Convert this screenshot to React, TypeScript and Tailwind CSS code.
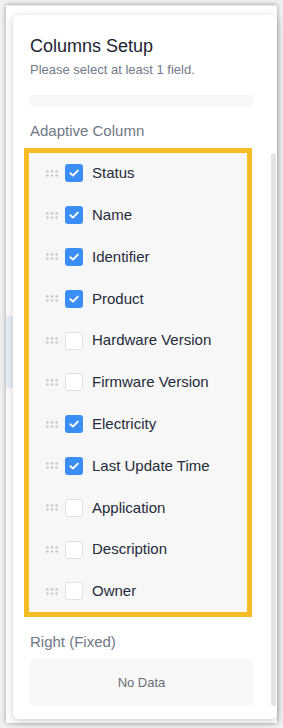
const fields = [
  { label: "Status", checked: true },
  { label: "Name", checked: true },
  { label: "Identifier", checked: true },
  { label: "Product", checked: true },
  { label: "Hardware Version", checked: false },
  { label: "Firmware Version", checked: false },
  { label: "Electricity", checked: true },
  { label: "Last Update Time", checked: true },
  { label: "Application", checked: false },
  { label: "Description", checked: false },
  { label: "Owner", checked: false },
];

function DragHandle() {
  return (
    <svg width="12" height="7" viewBox="0 0 12 7" className="shrink-0" aria-hidden="true">
      {[1.4, 6, 10.6].map((x) =>
        [1.4, 5.6].map((y) => <circle key={`${x}-${y}`} cx={x} cy={y} r="1.3" fill="#c9ccd3" />),
      )}
    </svg>
  );
}

function Checkbox({ checked }: { checked: boolean }) {
  if (!checked) {
    return <span className="block h-[18px] w-[18px] shrink-0 rounded-[3px] border border-[#dfe1e6] bg-white" />;
  }
  return (
    <span className="flex h-[18px] w-[18px] shrink-0 items-center justify-center rounded-[3px] bg-[#3a8ef6]">
      <svg width="12" height="12" viewBox="0 0 12 12" aria-hidden="true">
        <polyline
          points="2.4,6.2 5,8.6 9.8,3.6"
          fill="none"
          stroke="#fff"
          strokeWidth="1.9"
          strokeLinecap="round"
          strokeLinejoin="round"
        />
      </svg>
    </span>
  );
}

export default function App() {
  return (
    <div
      className="h-[728px] w-[283px] overflow-hidden bg-[#f1f1f1] pl-[6px] pt-[5px]"
      style={{ fontFamily: '"Liberation Sans", Arial, sans-serif' }}
    >
      {/* page behind the popover */}
      <div className="flex h-[718px] w-[271px] border-t border-[#e6e6e6] bg-white shadow-[0_0_5px_rgba(0,0,0,0.35)]">
        <div className="flex w-[7px] flex-col">
          <div className="h-[310px]" />
          <div className="h-[72px] bg-[#e8f0f8]" />
        </div>

        {/* popover */}
        <div className="relative mt-[9px] flex h-[704px] w-[264px] flex-col items-start rounded-[6px] bg-white pl-[17px] pr-[24px] pt-[18.5px] shadow-[0_2px_8px_rgba(0,0,0,0.2)]">
          <h2 className="text-[18px] leading-[24px] text-[#1d2433]">Columns Setup</h2>
          <p className="mt-[3px] text-[13px] leading-[18px] text-[#717a8a]">Please select at least 1 field.</p>

          <div className="mt-[16px] h-[12px] w-[223px] rounded-[4px] bg-[#f7f7f7]" />

          <p className="mt-[14.5px] text-[15px] leading-[20px] text-[#6f7785]">Adaptive Column</p>

          <div className="-ml-[6px] mt-[6.5px] w-[228px] border-[5px] border-[#f5bd23] bg-[#f7f7f7]">
            {fields.map((f) => (
              <div key={f.label} className="flex h-[41.8px] items-center gap-[7px] pl-[17px]">
                <DragHandle />
                <Checkbox checked={f.checked} />
                <span className="ml-[2px] text-[15px] text-[#252b3a]">{f.label}</span>
              </div>
            ))}
          </div>

          <p className="mt-[14.7px] text-[15px] leading-[20px] text-[#6f7785]">Right (Fixed)</p>

          <div className="mt-[7px] flex h-[47.5px] w-[223px] items-center justify-center rounded-[5px] bg-[#f7f7f7] text-[13px] text-[#6b6f78]">
            No Data
          </div>

          {/* scrollbar thumb */}
          <div className="absolute bottom-[13px] right-[1px] top-[138px] w-[5px] rounded-full bg-[#e3e3e8]" />
        </div>
      </div>
    </div>
  );
}
